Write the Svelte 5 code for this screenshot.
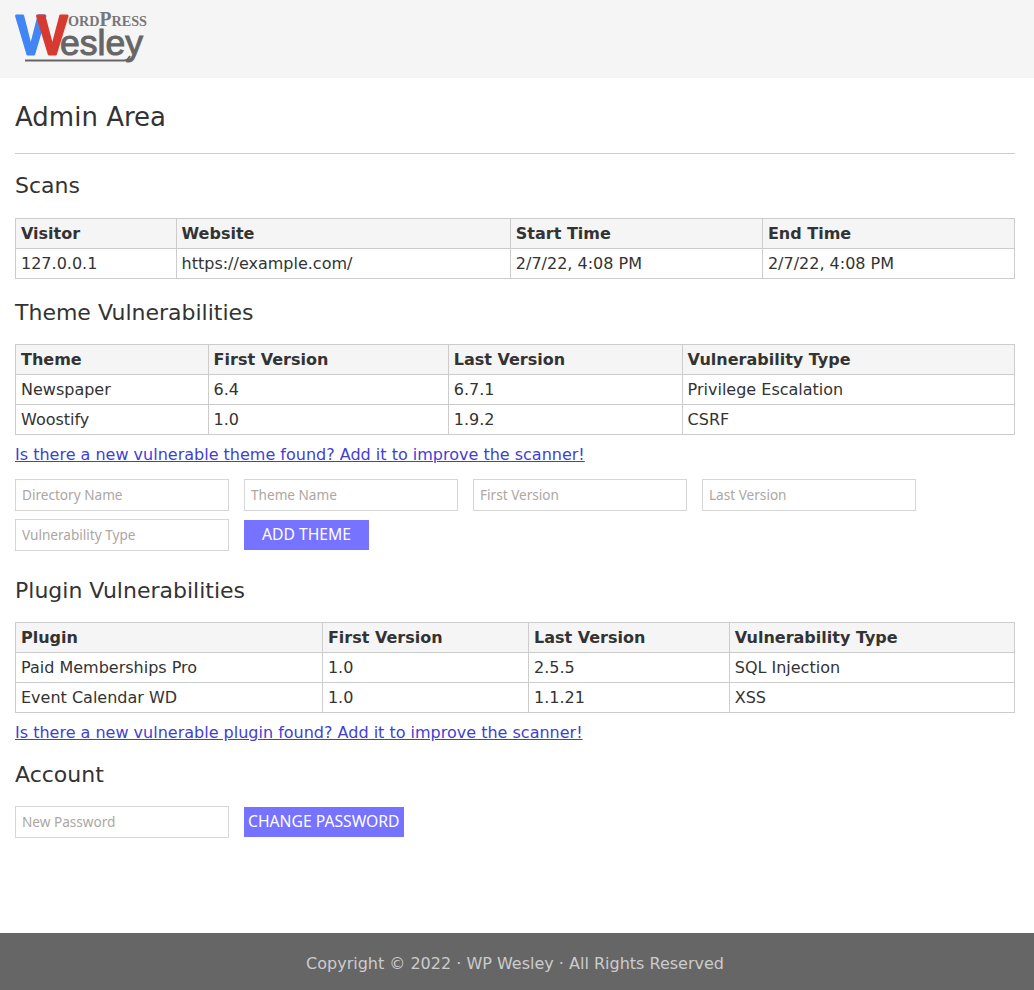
<script lang="ts">
  const scans = [['127.0.0.1', 'https://example.com/', '2/7/22, 4:08 PM', '2/7/22, 4:08 PM']];
  const themes = [
    ['Newspaper', '6.4', '6.7.1', 'Privilege Escalation'],
    ['Woostify', '1.0', '1.9.2', 'CSRF'],
  ];
  const plugins = [
    ['Paid Memberships Pro', '1.0', '2.5.5', 'SQL Injection'],
    ['Event Calendar WD', '1.0', '1.1.21', 'XSS'],
  ];
  const themeFields = ['Directory Name', 'Theme Name', 'First Version', 'Last Version', 'Vulnerability Type'];
</script>

{#snippet table(head: string[], rows: string[][])}
  <table>
    <thead>
      <tr>{#each head as h}<th>{h}</th>{/each}</tr>
    </thead>
    <tbody>
      {#each rows as row}
        <tr>{#each row as cell}<td>{cell}</td>{/each}</tr>
      {/each}
    </tbody>
  </table>
{/snippet}

<header>
  <svg class="logo" width="160" height="70" viewBox="0 0 160 70" aria-label="WP Wesley">
    <text class="vee" transform="translate(16 53.5) scale(0.79 1)" fill="#4285f4" stroke="#4285f4">V</text>
    <text class="vee" transform="translate(37 53.5) scale(0.82 1)" fill="#d63a30" stroke="#d63a30">V</text>
    <text x="68" y="25.5" class="wp" textLength="79" lengthAdjust="spacingAndGlyphs">ORD<tspan class="big">P</tspan>RESS</text>
    <text x="60" y="55" class="wes" textLength="83" lengthAdjust="spacingAndGlyphs">esley</text>
    <path d="M25 60.5 L124 60.5 Q128 60.5 130 56" fill="none" stroke="#666" stroke-width="2" />
  </svg>
</header>

<main>
  <h1>Admin Area</h1>
  <hr />

  <h2 class="scans">Scans</h2>
  {@render table(['Visitor', 'Website', 'Start Time', 'End Time'], scans)}

  <h2>Theme Vulnerabilities</h2>
  {@render table(['Theme', 'First Version', 'Last Version', 'Vulnerability Type'], themes)}
  <p class="add"><a href="#theme">Is there a new vulnerable theme found? Add it to improve the scanner!</a></p>
  <form class="fields">
    {#each themeFields as f}<input placeholder={f} />{/each}
    <button type="button" class="add-theme">ADD THEME</button>
  </form>

  <h2 class="plugin">Plugin Vulnerabilities</h2>
  {@render table(['Plugin', 'First Version', 'Last Version', 'Vulnerability Type'], plugins)}
  <p class="add"><a href="#plugin">Is there a new vulnerable plugin found? Add it to improve the scanner!</a></p>

  <h2 class="account">Account</h2>
  <form class="fields tight">
    <input placeholder="New Password" />
    <button type="button">CHANGE PASSWORD</button>
  </form>
</main>

<footer>Copyright © 2022 · WP Wesley · All Rights Reserved</footer>

<style>
  :global(body) {
    margin: 0;
    font-family: "DejaVu Sans", sans-serif;
    font-size: 16px;
    color: #333;
    background: #fff;
  }
  header { height: 78px; background: #f5f5f5; }
  .logo { display: block; }
  .vee { font-family: "Liberation Sans", sans-serif; font-weight: 700; font-size: 56px; stroke-width: 3px; stroke-linejoin: round; }
  .wp { font-family: "Liberation Serif", serif; font-weight: 700; font-size: 14.5px; fill: #777; }
  .wp .big { font-size: 20px; }
  .wes { font-family: "Liberation Sans", sans-serif; font-size: 35px; fill: #666; stroke: #666; stroke-width: 1px; }

  main { padding: 0 19px 0 15px; height: 855px; box-sizing: border-box; }
  h1 { margin: 0; padding-top: 23px; font-size: 26px; font-weight: 400; line-height: 32px; }
  hr { margin: 20px 0 0; border: 0; border-top: 1px solid #ccc; }
  h2 { margin: 0; padding: 19px 0 18px; font-size: 22px; font-weight: 400; line-height: 26px; }
  h2.scans { padding-bottom: 19px; }
  h2.plugin { padding-top: 27px; }
  h2.account { padding-top: 20px; }

  table { width: 100%; border-collapse: collapse; line-height: 19px; margin-bottom: 2px; }
  th, td { border: 1px solid #ccc; padding: 5px; text-align: left; }
  th { background: #f5f5f5; font-weight: 700; }

  .add { margin: 0; padding-top: 8px; line-height: 19px; }
  a { color: #3f3fd4; }

  .fields { display: flex; flex-wrap: wrap; gap: 8px 15px; margin-top: 15px; align-items: center; }
  .fields.tight { margin-top: 0; }
  input {
    width: 214px; height: 32px; box-sizing: border-box; padding: 0 6px 2px;
    border: 1px solid #d6d6d6; border-radius: 0; outline: 0; background: #fff;
    font-family: "Noto Sans", sans-serif; font-size: 13.6px;
  }
  input::placeholder { color: #aca7a3; opacity: 1; }
  button {
    height: 30px; padding: 0 4px 2px; border: 0; background: #7573ff; color: #fff;
    font-family: "Noto Sans", sans-serif; font-size: 15.7px;
  }
  .add-theme { padding: 0 18px 2px; }

  footer {
    height: 57px; background: #666; color: #ccc; text-align: center; line-height: 61px; padding-right: 4px;
  }
</style>
